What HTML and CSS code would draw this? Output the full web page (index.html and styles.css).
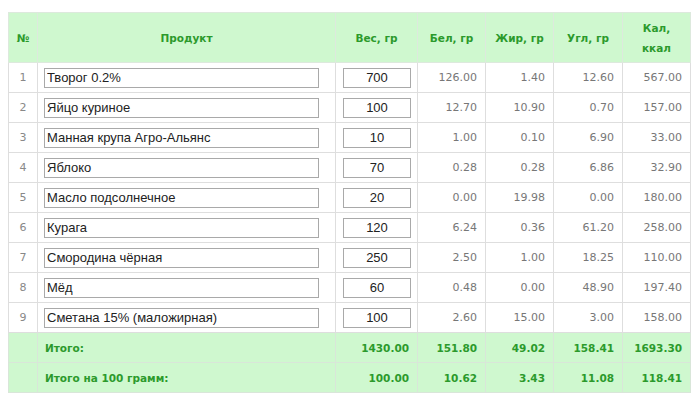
FILE: index.html
```html
<!DOCTYPE html>
<html lang="ru">
<head>
<meta charset="utf-8">
<link rel="stylesheet" href="styles.css">
</head>
<body>
<div class="page">
<table class="calc">
  <colgroup>
    <col class="c-num"><col class="c-prod"><col class="c-w"><col class="c-b"><col class="c-f"><col class="c-u"><col class="c-k">
  </colgroup>
  <thead>
    <tr>
      <th>№</th><th>Продукт</th><th>Вес, гр</th><th>Бел, гр</th><th>Жир, гр</th><th>Угл, гр</th><th>Кал,<br>ккал</th>
    </tr>
  </thead>
  <tbody>
    <tr><td class="n">1</td><td class="p"><input class="prod" value="Творог 0.2%"></td><td class="w"><input class="wt" value="700"></td><td>126.00</td><td>1.40</td><td>12.60</td><td>567.00</td></tr>
    <tr><td class="n">2</td><td class="p"><input class="prod" value="Яйцо куриное"></td><td class="w"><input class="wt" value="100"></td><td>12.70</td><td>10.90</td><td>0.70</td><td>157.00</td></tr>
    <tr><td class="n">3</td><td class="p"><input class="prod" value="Манная крупа Агро-Альянс"></td><td class="w"><input class="wt" value="10"></td><td>1.00</td><td>0.10</td><td>6.90</td><td>33.00</td></tr>
    <tr><td class="n">4</td><td class="p"><input class="prod" value="Яблоко"></td><td class="w"><input class="wt" value="70"></td><td>0.28</td><td>0.28</td><td>6.86</td><td>32.90</td></tr>
    <tr><td class="n">5</td><td class="p"><input class="prod" value="Масло подсолнечное"></td><td class="w"><input class="wt" value="20"></td><td>0.00</td><td>19.98</td><td>0.00</td><td>180.00</td></tr>
    <tr><td class="n">6</td><td class="p"><input class="prod" value="Курага"></td><td class="w"><input class="wt" value="120"></td><td>6.24</td><td>0.36</td><td>61.20</td><td>258.00</td></tr>
    <tr><td class="n">7</td><td class="p"><input class="prod" value="Смородина чёрная"></td><td class="w"><input class="wt" value="250"></td><td>2.50</td><td>1.00</td><td>18.25</td><td>110.00</td></tr>
    <tr><td class="n">8</td><td class="p"><input class="prod" value="Мёд"></td><td class="w"><input class="wt" value="60"></td><td>0.48</td><td>0.00</td><td>48.90</td><td>197.40</td></tr>
    <tr><td class="n">9</td><td class="p"><input class="prod" value="Сметана 15% (маложирная)"></td><td class="w"><input class="wt" value="100"></td><td>2.60</td><td>15.00</td><td>3.00</td><td>158.00</td></tr>
  </tbody>
  <tfoot>
    <tr><td></td><td class="lbl">Итого:</td><td>1430.00</td><td>151.80</td><td>49.02</td><td>158.41</td><td>1693.30</td></tr>
    <tr><td></td><td class="lbl">Итого на 100 грамм:</td><td>100.00</td><td>10.62</td><td>3.43</td><td>11.08</td><td>118.41</td></tr>
  </tfoot>
</table>
</div>
</body>
</html>
```
FILE: styles.css
```css
html, body {
  margin: 0;
  padding: 0;
  background: #fff;
}
.page {
  padding: 12px 10px 0 8px;
}
.calc {
  width: 682px;
  table-layout: fixed;
  border-collapse: collapse;
  border: 1px solid #dcdcdc;
  font-family: "DejaVu Sans", Verdana, sans-serif;
  font-size: 11px;
}
.c-num { width: 29px; }
.c-prod { width: 298px; }
.c-w { width: 82px; }
.c-b { width: 68px; }
.c-f { width: 68px; }
.c-u { width: 69px; }
.c-k { width: 68px; }
.calc th {
  height: 49px;
  padding: 0 4px;
  background: #cff8cf;
  color: #2c9a2c;
  font-weight: bold;
  font-size: 10.5px;
  line-height: 20px;
  text-align: center;
  border: 1px solid #dde9dd;
}
.calc tbody td {
  height: 29px;
  padding: 0 8px 0 4px;
  border: 1px solid #dedede;
  color: #777;
  text-align: right;
}
.calc tbody td.n {
  text-align: center;
  padding: 0;
  color: #888;
}
.calc tbody td.p {
  padding: 0 0 0 6px;
  text-align: left;
}
.calc tbody td.w {
  padding: 0 0 0 7px;
  text-align: left;
}
.prod, .wt {
  box-sizing: border-box;
  height: 20px;
  margin: 0;
  padding: 0 2px;
  border: 1px solid #a9a9a9;
  background: #fff;
  color: #222;
  font-family: "Liberation Sans", Arial, sans-serif;
  font-size: 13px;
  display: block;
}
.prod {
  width: 275px;
  text-align: left;
}
.wt {
  width: 68px;
  text-align: center;
}
.calc tfoot td {
  height: 29px;
  padding: 0 8px 0 4px;
  background: #cff8cf;
  border: 1px solid #d9e6d9;
  color: #2c9a2c;
  font-weight: bold;
  font-size: 10.5px;
  text-align: right;
}
.calc tfoot td.lbl {
  text-align: left;
  padding-left: 7px;
}
```
